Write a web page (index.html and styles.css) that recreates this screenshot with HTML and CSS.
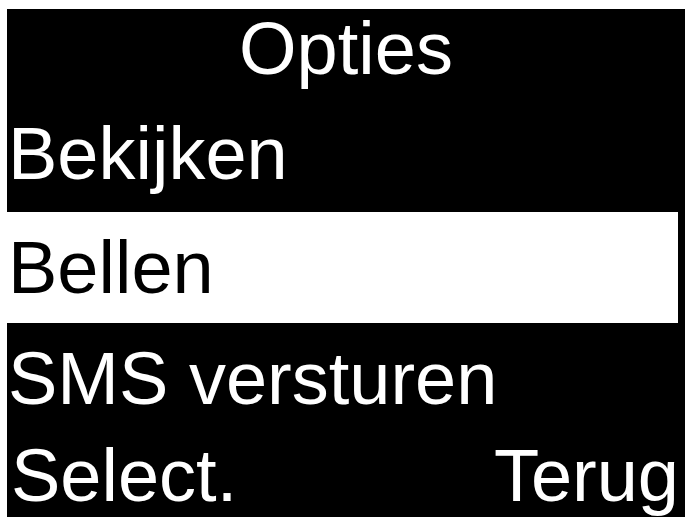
FILE: index.html
```html
<!DOCTYPE html>
<html lang="nl">
<head>
<meta charset="utf-8">
<title>Opties</title>
<link rel="stylesheet" href="styles.css">
</head>
<body>
<div class="screen">
  <div class="title">Opties</div>
  <ul class="menu">
    <li class="item first">Bekijken</li>
    <li class="item selected">Bellen</li>
    <li class="item">SMS versturen</li>
  </ul>
  <div class="softkeys">
    <span class="softkey">Select.</span>
    <span class="softkey">Terug</span>
  </div>
</div>
</body>
</html>
```

FILE: styles.css
```css
html, body {
  margin: 0;
  padding: 0;
  background: #ffffff;
}

body {
  width: 690px;
  height: 517px;
  overflow: hidden;
  padding: 9px 0 0 7px;
  box-sizing: border-box;
}

.screen {
  width: 678px;
  height: 520px;
  background: #000000;
  color: #ffffff;
  font-family: "Liberation Sans", Arial, sans-serif;
  font-size: 74px;
  line-height: 75px;
  display: flex;
  flex-direction: column;
}

.title {
  height: 92px;
  text-align: center;
  padding-top: 2px;
  box-sizing: border-box;
}

.menu {
  list-style: none;
  margin: 0;
  padding: 0;
}

.item {
  height: 111px;
  display: flex;
  align-items: center;
  padding-left: 1px;
  margin-right: 7px;
}

.first {
  padding-bottom: 6px;
  box-sizing: border-box;
}

.selected {
  background: #ffffff;
  color: #000000;
}

.softkeys {
  display: flex;
  justify-content: space-between;
  padding: 4px 6px 0 4px;
}
```
